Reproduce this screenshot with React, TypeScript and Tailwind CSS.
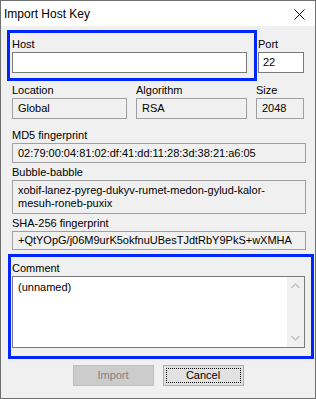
import React from "react"

const Label = ({ children }: { children: React.ReactNode }) => (
    <div className="h-[13px] leading-[13px] whitespace-nowrap">{children}</div>
)

const ReadBox = ({ children, className }: { children: React.ReactNode; className?: string }) => (
    <div className={"mt-[1px] border border-[#a0a0a0] bg-[#f0f0f0] px-[5px] flex items-center whitespace-nowrap " + (className ?? "")}>
        {children}
    </div>
)

const App = () => {
    return (
        <div className="relative w-[316px] h-[399px] border border-[#6f6f6f] bg-[#f0f0f0] text-[11px] text-black font-['Liberation_Sans',Arial,sans-serif] overflow-hidden">
            {/* title bar */}
            <div className="h-[25px] bg-white flex items-center justify-between pl-[3px] pr-[10px]">
                <span className="text-[12px] leading-[14px] mt-[1px]">Import Host Key</span>
                <svg width="11" height="11" viewBox="0 0 11 11" className="mt-[2px]">
                    <path d="M0.5 0.5 L10.5 10.5 M10.5 0.5 L0.5 10.5" stroke="#000" strokeWidth="1" fill="none" />
                </svg>
            </div>

            <div className="pl-[11px] flex flex-col">
                {/* host / port */}
                <div className="flex mt-[12px]">
                    <div className="w-[235px]">
                        <Label>Host</Label>
                        <div className="mt-[1px] h-[21px] border border-[#7a7a7a] bg-white" />
                    </div>
                    <div className="w-[46px] ml-[11px]">
                        <Label>Port</Label>
                        <div className="mt-[1px] h-[21px] border border-[#7a7a7a] bg-white px-[4px] flex items-center">22</div>
                    </div>
                </div>

                {/* location / algorithm / size */}
                <div className="flex mt-[11px]">
                    <div className="w-[115px]">
                        <Label>Location</Label>
                        <ReadBox className="h-[21px]">Global</ReadBox>
                    </div>
                    <div className="w-[111px] ml-[9px]">
                        <Label>Algorithm</Label>
                        <ReadBox className="h-[21px]">RSA</ReadBox>
                    </div>
                    <div className="w-[48px] ml-[9px]">
                        <Label>Size</Label>
                        <ReadBox className="h-[21px]">2048</ReadBox>
                    </div>
                </div>

                <div className="w-[294px] mt-[10px]">
                    <Label>MD5 fingerprint</Label>
                    <ReadBox className="h-[20px]">02:79:00:04:81:02:df:41:dd:11:28:3d:38:21:a6:05</ReadBox>
                </div>

                <div className="w-[294px] mt-[3px]">
                    <Label>Bubble-babble</Label>
                    <div className="mt-[1px] h-[34px] border border-[#a0a0a0] bg-[#f0f0f0] px-[5px] pt-[3px] leading-[13px] whitespace-nowrap">
                        xobif-lanez-pyreg-dukyv-rumet-medon-gylud-kalor-
                        <br />
                        mesuh-roneb-puxix
                    </div>
                </div>

                <div className="w-[294px] mt-[3px]">
                    <Label>SHA-256 fingerprint</Label>
                    <ReadBox className="h-[19px]">+QtYOpG/j06M9urK5okfnuUBesTJdtRbY9PkS+wXMHA</ReadBox>
                </div>

                {/* comment */}
                <div className="w-[293px] mt-[12px]">
                    <Label>Comment</Label>
                    <div className="mt-[1px] h-[72px] border border-[#7a7a7a] bg-white flex">
                        <div className="flex-1 pl-[5px] pt-[4px] leading-[13px]">(unnamed)</div>
                        <div className="w-[17px] bg-[#f0f0f0] flex flex-col justify-between items-center py-[6px]">
                            <svg width="9" height="6" viewBox="0 0 9 6">
                                <path d="M0.5 5 L4.5 1 L8.5 5" stroke="#c2c2c2" strokeWidth="1.4" fill="none" />
                            </svg>
                            <svg width="9" height="6" viewBox="0 0 9 6">
                                <path d="M0.5 1 L4.5 5 L8.5 1" stroke="#c2c2c2" strokeWidth="1.4" fill="none" />
                            </svg>
                        </div>
                    </div>
                </div>
            </div>

            {/* buttons */}
            <div className="flex justify-center gap-[9px] mt-[17px]">
                <button className="w-[81px] h-[21px] border border-[#bfbfbf] bg-[#cccccc] text-[#838383] text-[11px] leading-none">
                    Import
                </button>
                <button className="w-[81px] h-[21px] border border-[#adadad] bg-[#e1e1e1] p-[2px] text-[11px] leading-none">
                    <div className="h-full border border-dotted border-black flex items-center justify-center">Cancel</div>
                </button>
            </div>

            {/* highlight overlays */}
            <div className="absolute left-[6px] top-[29px] w-[250px] h-[51px] border-[3px] border-[#0026ff] pointer-events-none" />
            <div className="absolute left-[7px] top-[253px] w-[306px] h-[105px] border-[3px] border-[#0026ff] pointer-events-none" />
        </div>
    )
}

export default App
